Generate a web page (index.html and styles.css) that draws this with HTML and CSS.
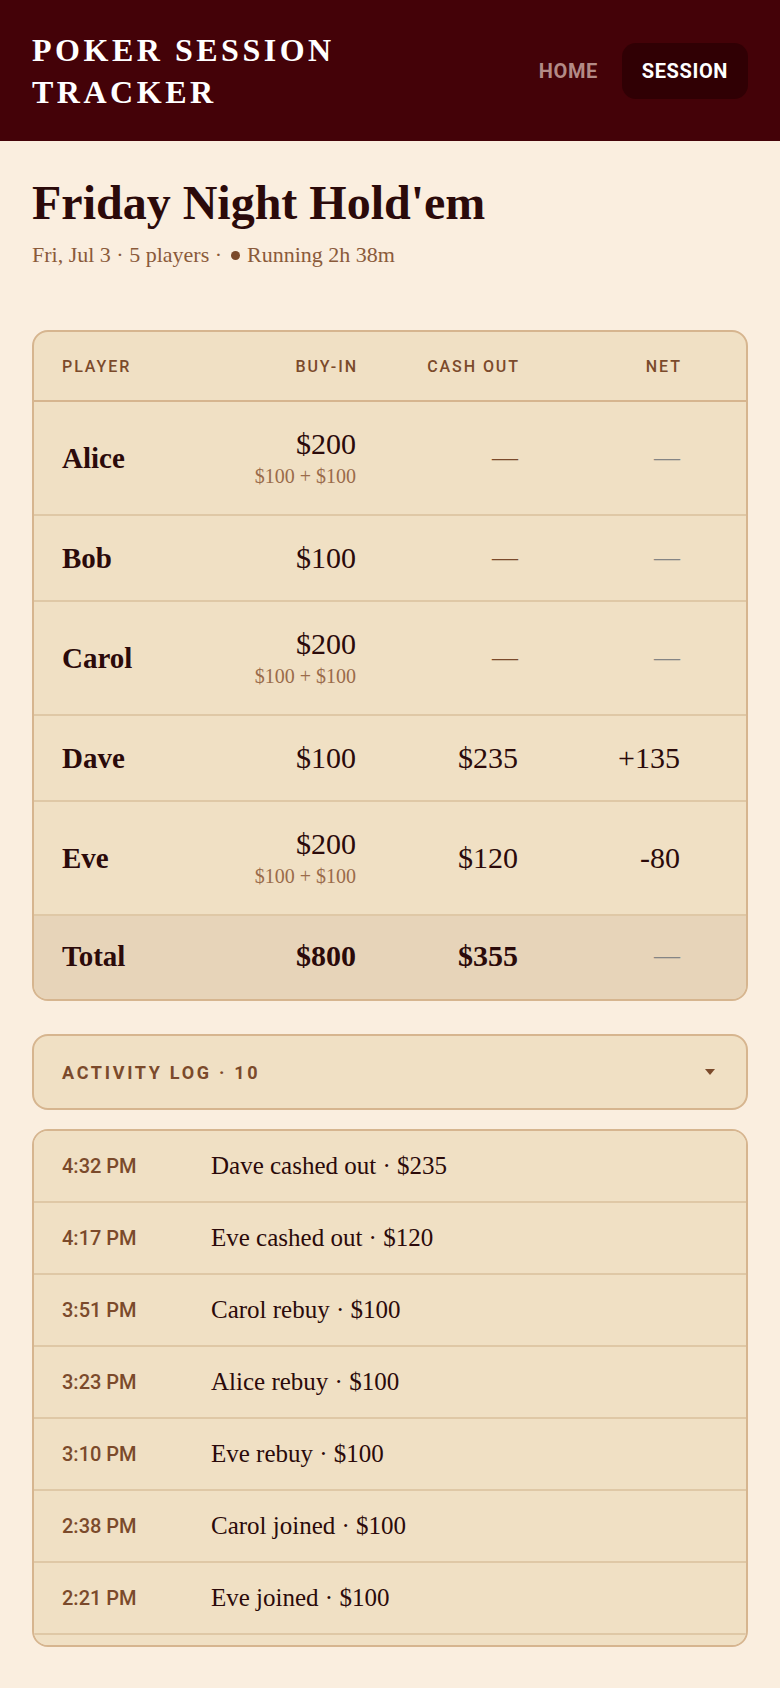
FILE: index.html
```html
<!DOCTYPE html>
<html lang="en">
<head>
    <meta charset="UTF-8">
    <meta name="viewport" content="width=device-width, initial-scale=1.0">
    <title>Poker Session Tracker</title>
    <link rel="stylesheet" href="styles.css">
</head>
<body>
    <header class="topbar">
        <div class="brand">POKER SESSION TRACKER</div>
        <nav class="nav">
            <a class="nav-link" href="#">HOME</a>
            <a class="nav-link active" href="#">SESSION</a>
        </nav>
    </header>

    <main class="page">
        <!-- session title -->
        <section class="session-head">
            <h1>Friday Night Hold'em</h1>
            <p class="meta">Fri, Jul 3 · 5 players ·<span class="live-dot"></span>Running 2h 38m</p>
        </section>

        <!-- player ledger -->
        <div class="ledger">
            <div class="ledger-row ledger-head">
                <span class="col-label">PLAYER</span>
                <span class="col-label num">BUY-IN</span>
                <span class="col-label num">CASH OUT</span>
                <span class="col-label num">NET</span>
            </div>
            <div class="ledger-row">
                <span class="name">Alice</span>
                <span class="num"><span class="amount">$200</span><span class="breakdown">$100 + $100</span></span>
                <span class="num"><span class="dash brown">—</span></span>
                <span class="num"><span class="dash grey">—</span></span>
            </div>
            <div class="ledger-row">
                <span class="name">Bob</span>
                <span class="num"><span class="amount">$100</span></span>
                <span class="num"><span class="dash brown">—</span></span>
                <span class="num"><span class="dash grey">—</span></span>
            </div>
            <div class="ledger-row">
                <span class="name">Carol</span>
                <span class="num"><span class="amount">$200</span><span class="breakdown">$100 + $100</span></span>
                <span class="num"><span class="dash brown">—</span></span>
                <span class="num"><span class="dash grey">—</span></span>
            </div>
            <div class="ledger-row">
                <span class="name">Dave</span>
                <span class="num"><span class="amount">$100</span></span>
                <span class="num"><span class="amount">$235</span></span>
                <span class="num"><span class="amount net">+135</span></span>
            </div>
            <div class="ledger-row">
                <span class="name">Eve</span>
                <span class="num"><span class="amount">$200</span><span class="breakdown">$100 + $100</span></span>
                <span class="num"><span class="amount">$120</span></span>
                <span class="num"><span class="amount net">-80</span></span>
            </div>
            <div class="ledger-row ledger-total">
                <span class="name">Total</span>
                <span class="num"><span class="amount">$800</span></span>
                <span class="num"><span class="amount">$355</span></span>
                <span class="num"><span class="dash grey">—</span></span>
            </div>
        </div>

        <!-- activity log -->
        <div class="log-toggle">
            <span class="log-title">ACTIVITY LOG · 10</span>
            <span class="caret"></span>
        </div>
        <ul class="log">
            <li><span class="log-time">4:32 PM</span><span class="log-text">Dave cashed out · $235</span></li>
            <li><span class="log-time">4:17 PM</span><span class="log-text">Eve cashed out · $120</span></li>
            <li><span class="log-time">3:51 PM</span><span class="log-text">Carol rebuy · $100</span></li>
            <li><span class="log-time">3:23 PM</span><span class="log-text">Alice rebuy · $100</span></li>
            <li><span class="log-time">3:10 PM</span><span class="log-text">Eve rebuy · $100</span></li>
            <li><span class="log-time">2:38 PM</span><span class="log-text">Carol joined · $100</span></li>
            <li><span class="log-time">2:21 PM</span><span class="log-text">Eve joined · $100</span></li>
            <li><span class="log-time">2:05 PM</span><span class="log-text">Dave joined · $100</span></li>
            <li><span class="log-time">1:58 PM</span><span class="log-text">Bob joined · $100</span></li>
            <li><span class="log-time">1:54 PM</span><span class="log-text">Alice joined · $100</span></li>
        </ul>
    </main>
</body>
</html>
```

FILE: styles.css
```css
body {
    margin: 0;
    padding: 0;
    background-color: #faeedf;
    color: #2b0a0a;
    font-family: "Liberation Serif", "DejaVu Serif", serif;
}

.topbar {
    height: 141px;
    box-sizing: border-box;
    padding: 0 32px;
    background-color: #440208;
    display: flex;
    align-items: center;
    justify-content: space-between;
}

.brand {
    max-width: 340px;
    color: #fff;
    font-size: 32px;
    font-weight: 600;
    line-height: 42px;
    letter-spacing: 0.11em;
}

.nav {
    display: flex;
    align-items: center;
    gap: 4px;
}

    .nav-link {
        height: 56px;
        padding: 0 20px;
        display: flex;
        align-items: center;
        border-radius: 14px;
        color: #b38a86;
        text-decoration: none;
        font-family: Roboto, "Liberation Sans", sans-serif;
        font-weight: bold;
        font-size: 20px;
        letter-spacing: 0.03em;
    }

        .nav-link.active {
            background-color: #300004;
            color: #fff;
        }

.page {
    padding: 38px 32px 40px;
}

.session-head h1 {
    margin: 0;
    font-size: 48px;
    font-weight: bold;
    line-height: 48px;
    color: #2b0a0a;
}

.meta {
    margin: 16px 0 0;
    font-size: 22px;
    line-height: 24px;
    color: #8a5a3a;
    display: flex;
    align-items: center;
}

.live-dot {
    width: 9px;
    height: 9px;
    margin: 0 7px 0 9px;
    border-radius: 50%;
    background-color: #7b4a2b;
    display: inline-block;
}

/* ledger */
.ledger {
    margin-top: 63px;
    background-color: #f0e0c4;
    border: 2px solid #d6b58f;
    border-radius: 16px;
    overflow: hidden;
}

.ledger-row {
    display: grid;
    grid-template-columns: 1fr 162px 162px 162px;
    align-items: center;
    padding: 24px 66px 24px 28px;
    border-bottom: 2px solid #dfc8a6;
}

    .ledger-row:last-child {
        border-bottom: none;
    }

.ledger-head {
    padding-top: 0;
    padding-bottom: 0;
    height: 68px;
    border-bottom-color: #d6b58f;
}

.col-label {
    font-family: Roboto, "Liberation Sans", sans-serif;
    font-size: 16px;
    font-weight: 500;
    letter-spacing: 0.12em;
    color: #7b4a2b;
}

    .col-label.num {
        margin-right: -0.12em;
    }

.num {
    text-align: right;
    display: flex;
    flex-direction: column;
    align-items: flex-end;
}

.name {
    font-size: 29px;
    font-weight: 600;
    line-height: 36px;
}

.amount {
    font-size: 30px;
    line-height: 36px;
}

.breakdown {
    font-size: 20px;
    line-height: 28px;
    color: #9a6b4a;
}

.dash {
    font-size: 26px;
    line-height: 36px;
}

    .dash.brown {
        color: #7b4a2b;
    }

    .dash.grey {
        color: #858585;
    }

.ledger-total {
    background-color: #e7d4b9;
    padding-top: 22px;
    padding-bottom: 25px;
}

    .ledger-total .name,
    .ledger-total .amount {
        font-weight: bold;
    }

/* activity log */
.log-toggle {
    margin-top: 33px;
    height: 72px;
    padding: 0 31px 0 28px;
    display: flex;
    align-items: center;
    justify-content: space-between;
    background-color: #f0e0c4;
    border: 2px solid #d6b58f;
    border-radius: 16px;
}

.log-title {
    font-family: Roboto, "Liberation Sans", sans-serif;
    font-weight: bold;
    font-size: 18px;
    letter-spacing: 0.15em;
    color: #7b4a2b;
}

.caret {
    width: 0;
    height: 0;
    border-left: 5.5px solid transparent;
    border-right: 5.5px solid transparent;
    border-top: 6px solid #7b4a2b;
}

.log {
    list-style: none;
    margin: 19px 0 0;
    padding: 0;
    max-height: 514px;
    overflow-y: auto;
    scrollbar-width: none;
    background-color: #f0e0c4;
    border: 2px solid #d6b58f;
    border-radius: 16px;
}

    .log li {
        height: 70px;
        padding: 0 28px;
        display: flex;
        align-items: center;
        border-bottom: 2px solid #dfc8a6;
    }

.log-time {
    width: 149px;
    flex-shrink: 0;
    font-family: Roboto, "Liberation Sans", sans-serif;
    font-weight: 500;
    font-size: 20px;
    color: #7b4a2b;
}

.log-text {
    font-size: 25px;
    color: #2b0a0a;
}
```
